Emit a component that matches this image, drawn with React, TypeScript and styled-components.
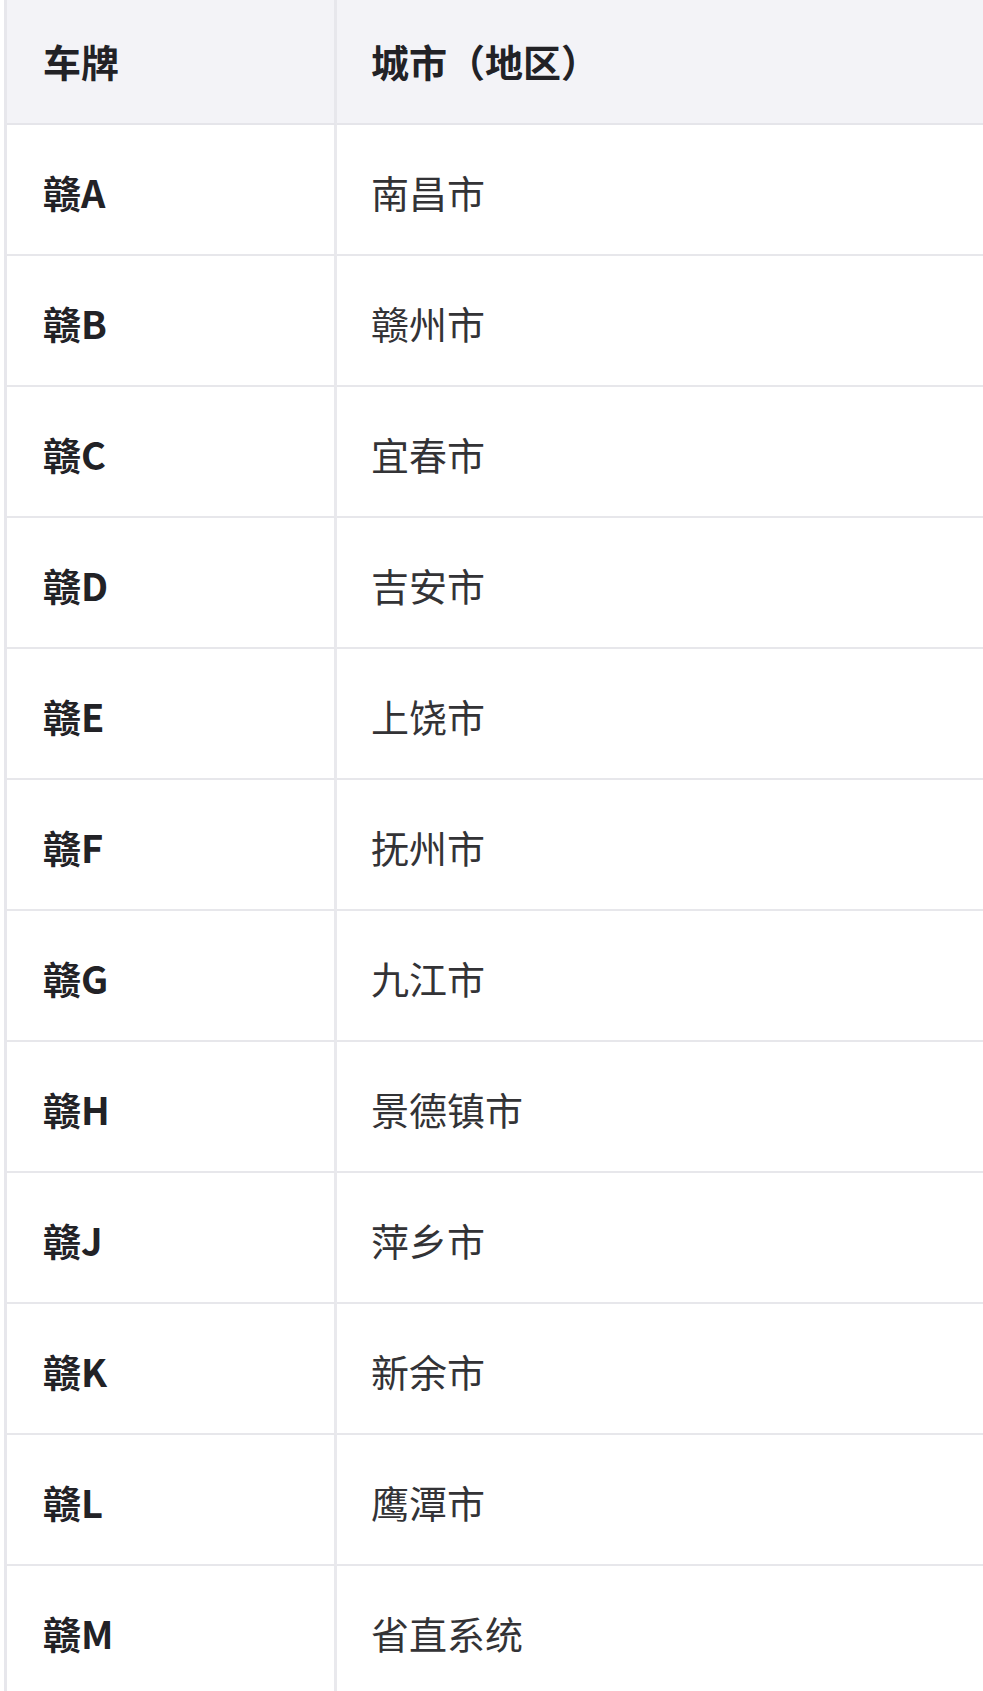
import { Fragment } from "react";
import styled, { createGlobalStyle } from "styled-components";

const GlobalStyle = createGlobalStyle`
  html, body {
    margin: 0;
    padding: 0;
    background: #ffffff;
    overflow: hidden;
  }
  body {
    font-family: "Noto Sans CJK SC", "Noto Sans", sans-serif;
  }
`;

const plates = [
  { plate: "赣A", city: "南昌市" },
  { plate: "赣B", city: "赣州市" },
  { plate: "赣C", city: "宜春市" },
  { plate: "赣D", city: "吉安市" },
  { plate: "赣E", city: "上饶市" },
  { plate: "赣F", city: "抚州市" },
  { plate: "赣G", city: "九江市" },
  { plate: "赣H", city: "景德镇市" },
  { plate: "赣J", city: "萍乡市" },
  { plate: "赣K", city: "新余市" },
  { plate: "赣L", city: "鹰潭市" },
  { plate: "赣M", city: "省直系统" },
];

const Wrapper = styled.div`
  width: 983px;
  height: 1691px;
  overflow: hidden;
  padding-left: 4px;
  box-sizing: border-box;
`;

const Table = styled.div`
  width: 1100px;
  display: grid;
  grid-template-columns: 330px 1fr;
  grid-template-rows: 124.5px;
  grid-auto-rows: 131px;
  border-left: 3px solid #e7e7ec;
`;

const HeadCell = styled.div<{ $first?: boolean }>`
  display: flex;
  align-items: center;
  box-sizing: border-box;
  background: #f3f3f7;
  border-bottom: 2px solid #e5e5ea;
  border-right: ${(p) => (p.$first ? "3px solid #e7e7ec" : "none")};
  padding: 0 0 0 ${(p) => (p.$first ? 36 : 34)}px;
  font-size: 38px;
  font-weight: 700;
  color: #222226;
  line-height: 1;
`;

const Cell = styled.div<{ $first?: boolean }>`
  display: flex;
  align-items: center;
  box-sizing: border-box;
  border-bottom: 2px solid #e7e7eb;
  border-right: ${(p) => (p.$first ? "3px solid #e9e9ed" : "none")};
  padding: 5px 0 0 ${(p) => (p.$first ? 36 : 34)}px;
  font-size: 38px;
  font-weight: ${(p) => (p.$first ? 700 : 400)};
  color: ${(p) => (p.$first ? "#222226" : "#333336")};
  line-height: 1;
  white-space: nowrap;
`;

export default function App() {
  return (
    <>
      <GlobalStyle />
      <Wrapper>
        <Table>
          <HeadCell $first>车牌</HeadCell>
          <HeadCell>城市（地区）</HeadCell>
          {plates.map((row) => (
            <Fragment key={row.plate}>
              <Cell $first>{row.plate}</Cell>
              <Cell>{row.city}</Cell>
            </Fragment>
          ))}
        </Table>
      </Wrapper>
    </>
  );
}
